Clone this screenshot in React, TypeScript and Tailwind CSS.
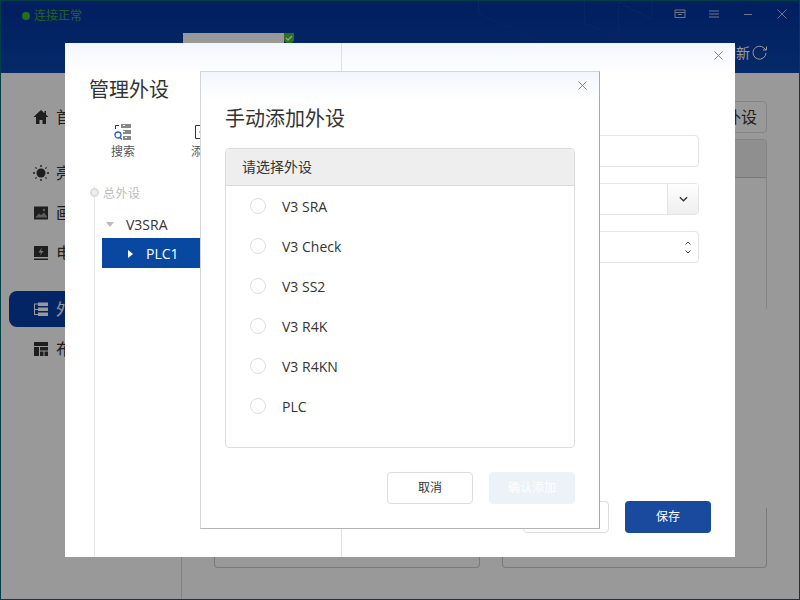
import { ReactNode } from "react";

const font = { fontFamily: '"Open Sans", "Noto Sans CJK SC", sans-serif' };

function CloseIcon({ className }: { className: string }) {
  return (
    <svg viewBox="0 0 10 10" className={className} fill="none" stroke="currentColor" strokeWidth="1">
      <path d="M0.5 0.5 9.5 9.5M9.5 0.5 0.5 9.5" />
    </svg>
  );
}

function SideItem({ label, icon, active, className }: { label: string; icon: ReactNode; active?: boolean; className: string }) {
  return (
    <div
      className={`flex items-center ml-[8px] w-[163px] rounded-lg pl-[24px] gap-[7px] text-[16px] leading-[36px] h-[36px] ${className} ${
        active ? "bg-[#053fa8] text-white" : "text-[#333]"
      }`}
    >
      <span className="w-4 h-4 flex items-center justify-center">{icon}</span>
      {label}
    </div>
  );
}

function Background() {
  return (
    <div className="w-[800px] h-[600px] flex flex-col border border-[#006a78]">
      {/* header */}
      <div className="relative h-[72px] shrink-0 bg-gradient-to-b from-[#03329f] to-[#0a46ae] flex">
        <div className="flex items-center gap-[4px] h-[30px] pl-[21px] text-[12px] text-[#3fa535]">
          <span className="w-2 h-2 rounded-full bg-[#41b82f]" />
          连接正常
        </div>
        <div className="absolute left-[182px] top-[32px] w-[101px] h-[11px] bg-white" />
        <div className="absolute left-[283px] top-[32px] w-[10px] h-[10px] bg-[#49c02c] rounded-b-sm flex items-center justify-center">
          <svg viewBox="0 0 10 10" className="w-[10px] h-[10px]" fill="none" stroke="#fff" strokeWidth="1.4">
            <path d="M2 5 4 7 8 3" />
          </svg>
        </div>
        <svg className="absolute left-[470px] top-0 w-[190px] h-[50px]" viewBox="0 0 190 50" fill="none" stroke="#0f3fa8" strokeWidth="1">
          <path d="M7.500 0V12L73 43M113.500 0V22.500L147.500 36V1.500L181 18V0" />
        </svg>
        <div className="ml-auto flex items-start pt-[5px] pr-[12px] gap-[18px] text-[#b9c8e8]">
          <svg viewBox="0 0 16 16" className="w-4 h-4" fill="none" stroke="currentColor" strokeWidth="1">
            <path d="M3 4h10v7.500H3zM3 6.500h10M6 8.500h4" />
          </svg>
          <svg viewBox="0 0 16 16" className="w-4 h-4" fill="none" stroke="currentColor" strokeWidth="1">
            <path d="M3 5h10M3 8h10M3 11h10" />
          </svg>
          <svg viewBox="0 0 16 16" className="w-4 h-4" fill="none" stroke="currentColor" strokeWidth="1">
            <path d="M4 8.500h8" />
          </svg>
          <CloseIcon className="w-[10px] h-[10px] mt-[3px] ml-[3px]" />
        </div>
        <div className="absolute right-[31px] top-[41px] flex items-center gap-[2px] text-[14px] text-white">
          刷新
          <svg viewBox="0 0 16 16" className="w-4 h-4" fill="none" stroke="currentColor" strokeWidth="1">
            <path d="M14 8a6.500 6.500 0 1 1-2-5l2 2M14.500 1.500V5H11" />
          </svg>
        </div>
      </div>
      {/* body */}
      <div className="flex-1 flex min-h-0 bg-white">
        <div className="w-[181px] border-r border-[#d8d8d8] pt-[26px]">
          <SideItem
            label="首页"
            className="mb-5"
            icon={
              <svg viewBox="0 0 16 16" className="w-4 h-4" fill="#333">
                <path d="M8 1 11.500 4.200V2H13v3.600L15.500 8H13v7H9.500v-4h-3v4H3V8H.5z" />
              </svg>
            }
          />
          <SideItem
            label="亮度"
            className="mb-1"
            icon={
              <svg viewBox="0 0 16 16" className="w-4 h-4" fill="#333">
                <circle cx="8" cy="8" r="4.500" />
                <path d="M7.300 0h1.400v2H7.300zM7.300 14h1.400v2H7.300zM0 7.300h2v1.400H0zM14 7.300h2v1.400h-2zM2 2l1.500.5.500 1.500-1.500-.5zM14 2l-.5 1.500-1.500.5.500-1.500zM2 14l.5-1.500 1.500-.5-.5 1.500zM14 14l-1.500-.5-.5-1.500 1.500.5z" />
              </svg>
            }
          />
          <SideItem
            label="画面"
            className="mb-1"
            icon={
              <svg viewBox="0 0 16 16" className="w-4 h-4">
                <path d="M1 1.500h14v13H1z" fill="#333" />
                <path d="M2 12.500 6 8.500l2 1.500 3-2.500 3 4v1H2z" fill="#999" />
                <circle cx="11" cy="5" r="1.300" fill="#999" />
              </svg>
            }
          />
          <SideItem
            label="电源"
            className="mb-5"
            icon={
              <svg viewBox="0 0 16 16" className="w-4 h-4">
                <path d="M1 1h14v11H1zM1 13.500h14V15H1z" fill="#333" />
                <path d="M9 2.500 5.500 7.500H8l-1 3 3.500-4.500H8z" fill="#ccc" />
              </svg>
            }
          />
          <SideItem
            label="外设"
            active
            className="mb-1"
            icon={
              <svg viewBox="0 0 16 16" className="w-4 h-4" fill="#fff">
                <path d="M5 1.500h10v3.500H5zM5 6.500h10V10H5zM5 11.500h10V15H5zM1 2.500h4v1H2v4.500h3v1H2v4h3v1H1z" />
              </svg>
            }
          />
          <SideItem
            label="布局"
            icon={
              <svg viewBox="0 0 16 16" className="w-4 h-4" fill="#333">
                <path d="M1 1h14v4H1zM1 6h5v9H1zM7 6h8v3.500H7zM7 10.500h3.500V15H7zM11.500 10.500H15V15h-3.500z" />
              </svg>
            }
          />
        </div>
        <div className="flex-1 pl-8 pr-8 pt-7 flex flex-col min-w-0">
          <div className="ml-auto h-[32px] w-[84px] rounded border border-[#ddd] text-[16px] leading-[30px] text-center text-[#333]">
            管理外设
          </div>
          <div className="mt-[6px] h-[170px] rounded-t border border-[#ddd] border-b-0">
            <div className="h-[38px] bg-[#eee] border-b border-[#ccc]" />
          </div>
          <div className="mt-auto mb-[31px] flex gap-[22px]">
            <div className="w-[266px] h-[60px] rounded-b border border-[#ccc] border-t-0" />
            <div className="flex-1 h-[60px] rounded-b border border-[#ccc] border-t-0" />
          </div>
        </div>
      </div>
    </div>
  );
}

function Tree() {
  return (
    <div className="relative ml-[29px] mt-[25px] flex-1 border-l border-[#e8e8e8]">
      <div className="absolute -left-[5px] top-[2px] h-[9px] w-[9px] rounded-full border-[2px] border-[#ddd] bg-[#eee]" />
      <div className="pl-[8px] text-[12px] leading-[16px] text-[#bbb] tracking-[0.5px]">总外设</div>
      <div className="flex items-center pl-[11px] pt-[11px] h-[33px] text-[14px] text-[#333]">
        <span className="mr-[12px] w-0 h-0 border-x-[4px] border-x-transparent border-t-[5px] border-t-[#bbb]" />
        V3SRA
      </div>
      <div className="ml-[7px] mt-[3px] flex items-center h-[30px] pt-[1px] bg-[#0848a0] text-[14px] text-white pl-[26px]">
        <span className="mr-[13px] w-0 h-0 border-y-[4px] border-y-transparent border-l-[5px] border-l-white" />
        PLC1
      </div>
    </div>
  );
}

function ManageDialog() {
  return (
    <div className="absolute left-[65px] top-[43px] w-[670px] h-[514px] flex bg-gradient-to-b from-[#f2f6fe] to-white to-[30px]">
      <div className="w-[277px] shrink-0 border-r border-[#e0e0e0] flex flex-col">
        <div className="pl-[24px] pt-[31px] text-[20px] leading-[32px] text-[#333]">管理外设</div>
        <div className="flex pl-[46px] pt-[17px] gap-[56px] text-[12px] text-[#555]">
          <div className="flex flex-col items-center gap-[2px]">
            <svg viewBox="0 0 18 18" className="w-[18px] h-[18px]" fill="none">
              <path d="M1.500 6V2.500H5" stroke="#333" />
              <path d="M7 1h10v4H7zM9 7h8v4H9zM9 13h8v4H9z" fill="#888" />
              <path d="M9 2.500h2M9 8.500h2M11 14.500h2" stroke="#fff" />
              <circle cx="4" cy="12" r="3" stroke="#2a5fd0" strokeWidth="1.300" />
              <path d="M6 14.500l2 2" stroke="#2a5fd0" strokeWidth="1.300" />
            </svg>
            搜索
          </div>
          <div className="flex flex-col items-center gap-[2px]">
            <svg viewBox="0 0 18 18" className="w-[18px] h-[18px]" fill="none">
              <path d="M1.500 2.500h14v13h-14z" stroke="#333" />
              <path d="M5 9h8M9 5v8" stroke="#3a9a3a" />
            </svg>
            添加
          </div>
        </div>
        <Tree />
      </div>
      <div className="flex-1 relative flex flex-col pl-[20px] pr-[36px] pt-[92px] pb-[24px]">
        <CloseIcon className="absolute right-[12px] top-[8px] w-[9px] h-[9px] text-[#777]" />
        <div className="h-[32px] rounded border border-[#e4e4e4]" />
        <div className="mt-[16px] h-[32px] flex rounded-sm border border-[#e4e4e4]">
          <div className="flex-1" />
          <div className="w-[31px] border-l border-[#e4e4e4] bg-gradient-to-b from-white to-[#eee] flex items-center justify-center">
            <svg viewBox="0 0 10 6" className="w-[9px] h-[6px]" fill="none" stroke="#333" strokeWidth="1.500">
              <path d="M1 1l4 4 4-4" />
            </svg>
          </div>
        </div>
        <div className="mt-[16px] h-[32px] flex items-center justify-end rounded-sm border border-[#e4e4e4] pr-[7px]">
          <svg viewBox="0 0 6 13" className="w-[6px] h-[13px]" fill="none" stroke="#444" strokeWidth="1">
            <path d="M.5 3.500 3 1l2.500 2.500M.500 9.500 3 12l2.500-2.500" />
          </svg>
        </div>
        <div className="mt-auto flex justify-end gap-[16px] -mr-[12px] text-[12px]">
          <div className="w-[86px] h-[32px] rounded-sm border border-[#dcdce6] bg-white" />
          <div className="w-[86px] h-[32px] rounded-sm bg-[#1a4a9e] text-white flex items-center justify-center">保存</div>
        </div>
      </div>
    </div>
  );
}

function AddDialog() {
  const options = ["V3 SRA", "V3 Check", "V3 SS2", "V3 R4K", "V3 R4KN", "PLC"];
  return (
    <div className="absolute left-[200px] top-[71px] w-[400px] h-[458px] border border-[#d4d4d8] border-r-[#aaa] border-b-[#b4b4b4] bg-gradient-to-b from-[#f2f6fe] to-white to-[30px] flex flex-col px-[24px] pt-[31px] pb-[24px]">
      <CloseIcon className="absolute right-[12px] top-[9px] w-[9px] h-[9px] text-[#777]" />
      <div className="text-[20px] leading-[32px] text-[#333]">手动添加外设</div>
      <div className="mt-[13px] h-[300px] rounded border border-[#dcdcdc] overflow-hidden">
        <div className="h-[37px] bg-[#eee] border-b border-[#dcdcdc] pl-[16px] text-[14px] leading-[35px] text-[#333]">
          请选择外设
        </div>
        <div className="pl-[24px]">
          {options.map((o) => (
            <div key={o} className="flex items-center h-[40px] gap-[16px] text-[14px] text-[#333]">
              <span className="w-4 h-4 rounded-full border border-[#ddd] bg-white" />
              {o}
            </div>
          ))}
        </div>
      </div>
      <div className="mt-auto flex justify-end gap-[16px] text-[12px]">
        <div className="w-[86px] h-[32px] rounded-sm border border-[#dcdce6] bg-white text-[#333] flex items-center justify-center">取消</div>
        <div className="w-[86px] h-[32px] rounded-sm bg-[#edf1f8] text-white flex items-center justify-center">确认添加</div>
      </div>
    </div>
  );
}

export default function App() {
  return (
    <div className="relative w-[800px] h-[600px] overflow-hidden" style={font}>
      <Background />
      <div className="absolute inset-0 bg-black/40" />
      <ManageDialog />
      <AddDialog />
    </div>
  );
}
